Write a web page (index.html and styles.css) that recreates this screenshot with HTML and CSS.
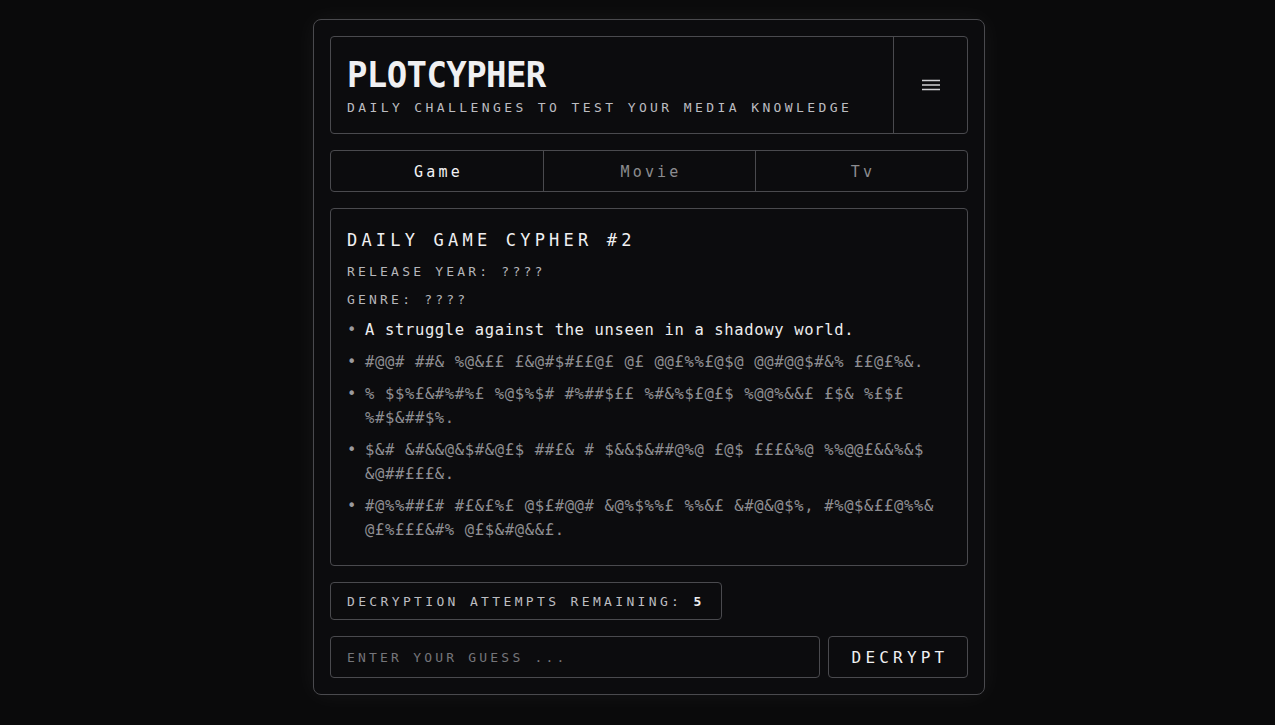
FILE: index.html
```html
<!DOCTYPE html>
<html lang="en">
<head>
<meta charset="utf-8">
<title>PlotCypher</title>
<link rel="stylesheet" href="styles.css">
</head>
<body>
<main class="app">
  <header class="header">
    <div class="brand">
      <h1 class="title">PLOTCYPHER</h1>
      <p class="subtitle">DAILY CHALLENGES TO TEST YOUR MEDIA KNOWLEDGE</p>
    </div>
    <button class="menu" aria-label="Menu">
      <svg width="18" height="12" viewBox="0 0 18 12"><path d="M0 1.5H18M0 6H18M0 10.5H18" stroke="#cfcfd2" stroke-width="1.5" fill="none"/></svg>
    </button>
  </header>
  <nav class="tabs">
    <button class="tab active">Game</button>
    <button class="tab">Movie</button>
    <button class="tab">Tv</button>
  </nav>
  <section class="puzzle">
    <h2 class="puzzle-title">DAILY GAME CYPHER #2</h2>
    <p class="meta first">RELEASE YEAR: ????</p>
    <p class="meta">GENRE: ????</p>
    <ul class="clues">
      <li class="clue revealed">A struggle against the unseen in a shadowy world.</li>
      <li class="clue">#@@# ##&amp; %@&amp;££ £&amp;@#$#££@£ @£ @@£%%£@$@ @@#@@$#&amp;% ££@£%&amp;.</li>
      <li class="clue">% $$%£&amp;#%#%£ %@$%$# #%##$££ %#&amp;%$£@£$ %@@%&amp;&amp;£ £$&amp; %£$£ %#$&amp;##$%.</li>
      <li class="clue">$&amp;# &amp;#&amp;&amp;@&amp;$#&amp;@£$ ##£&amp; # $&amp;&amp;$&amp;##@%@ £@$ £££&amp;%@ %%@@£&amp;&amp;%&amp;$ &amp;@##£££&amp;.</li>
      <li class="clue">#@%%##£# #£&amp;£%£ @$£#@@# &amp;@%$%%£ %%&amp;£ &amp;#@&amp;@$%, #%@$&amp;££@%%&amp; @£%£££&amp;#% @£$&amp;#@&amp;&amp;£.</li>
    </ul>
  </section>
  <div class="attempts"><span>DECRYPTION ATTEMPTS REMAINING: <strong>5</strong></span></div>
  <form class="guess">
    <input class="guess-input" type="text" placeholder="ENTER YOUR GUESS ...">
    <button class="decrypt" type="button">DECRYPT</button>
  </form>
</main>
</body>
</html>
```

FILE: styles.css
```css
* { box-sizing: border-box; }
html, body {
  margin: 0;
  padding: 0;
  background: #0a0a0b;
  color: #e8e8ea;
  font-family: "DejaVu Sans Mono", "Liberation Mono", monospace;
}
body {
  padding-top: 19px;
  padding-left: 23px;
  display: flex;
  justify-content: center;
  min-height: 725px;
}
.app {
  width: 672px;
  height: 676px;
  background: #0c0c0e;
  border: 1px solid #4a4a4e;
  border-radius: 8px;
  padding: 16px;
  display: flex;
  flex-direction: column;
  box-shadow: 0 0 24px rgba(255,255,255,0.05);
}
.header {
  display: flex;
  height: 98px;
  border: 1px solid #4a4a4e;
  border-radius: 4px;
}
.brand {
  flex: 1;
  padding: 18px 16px 0 16px;
}
.title {
  margin: 0;
  font-size: 34px;
  line-height: 38px;
  font-weight: bold;
  letter-spacing: -0.6px;
  color: #f0f0f2;
  transform: scaleY(1.06);
  transform-origin: left center;
}
.subtitle {
  margin: 7px 0 0;
  font-size: 13px;
  line-height: 16px;
  letter-spacing: 3.4px;
  color: #bdbdc1;
}
.menu {
  width: 74px;
  background: transparent;
  border: none;
  border-left: 1px solid #4a4a4e;
  display: flex;
  align-items: center;
  justify-content: center;
  padding: 0;
}
.tabs {
  margin-top: 16px;
  display: grid;
  grid-template-columns: 1fr 1fr 1fr;
  height: 42px;
  border: 1px solid #4a4a4e;
  border-radius: 4px;
  overflow: hidden;
}
.tab {
  background: transparent;
  border: none;
  border-left: 1px solid #4a4a4e;
  color: #8c8c90;
  font-family: inherit;
  font-size: 15px;
  letter-spacing: 3.2px;
  padding: 2px 0 0 3px;
}
.tab:first-child { border-left: none; }
.tab.active { color: #f2f2f4; }
.puzzle {
  margin-top: 16px;
  border: 1px solid #4a4a4e;
  border-radius: 4px;
  padding: 20px 16px 14px;
  height: 358px;
}
.puzzle-title {
  margin: 0;
  font-size: 17px;
  line-height: 22px;
  font-weight: normal;
  letter-spacing: 4.2px;
  color: #f0f0f2;
}
.meta {
  margin: 6px 0 0;
  font-size: 13px;
  line-height: 22px;
  letter-spacing: 3.2px;
  color: #b6b6ba;
}
.meta.first { margin-top: 10px; }
.clues {
  list-style: none;
  margin: 7px 0 0;
  padding: 0;
  display: flex;
  flex-direction: column;
  gap: 8px;
}
.clue {
  position: relative;
  padding-left: 18px;
  font-size: 15.5px;
  line-height: 24px;
  letter-spacing: 0.65px;
  color: #8e8e92;
}
.clue::before {
  content: "•";
  position: absolute;
  left: 0;
  top: 0;
  color: #9a9a9e;
}
.clue.revealed { color: #ececee; }
.attempts {
  margin-top: 16px;
  align-self: flex-start;
  height: 38px;
  border: 1px solid #4a4a4e;
  border-radius: 4px;
  padding: 0 16px;
  display: flex;
  align-items: center;
  font-size: 13px;
  letter-spacing: 3.35px;
  color: #bdbdc1;
}
.attempts strong {
  font-weight: bold;
  color: #ececee;
}
.guess {
  margin: 16px 0 0;
  display: flex;
  gap: 8px;
  height: 42px;
}
.guess-input {
  flex: 1;
  background: transparent;
  border: 1px solid #4a4a4e;
  border-radius: 4px;
  padding: 0 16px;
  font-family: inherit;
  font-size: 13px;
  letter-spacing: 3.2px;
  color: #ececee;
}
.guess-input::placeholder { color: #75757a; }
.decrypt {
  width: 140px;
  background: transparent;
  border: 1px solid #4a4a4e;
  border-radius: 4px;
  font-family: inherit;
  font-size: 16px;
  letter-spacing: 4.2px;
  color: #f0f0f2;
  padding: 0 0 0 4px;
}
```
